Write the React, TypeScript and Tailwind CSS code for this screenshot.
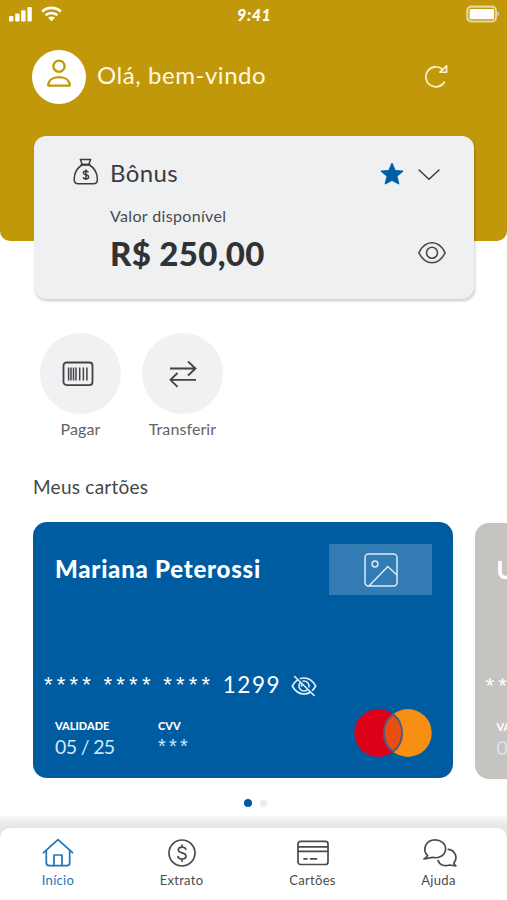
import type { ReactNode } from 'react'
import clsx from 'clsx'

function StatusBar() {
  return (
    <div className="relative flex h-7 items-start justify-between pl-[9px] pr-[7px] text-white">
      <div className="flex gap-[9px] pt-[6px]">
        <svg width="23" height="16" viewBox="0 0 23 16" fill="currentColor">
          <rect x="0" y="10" width="4.4" height="5.4" rx="1.2" />
          <rect x="6.2" y="7.4" width="4.4" height="8" rx="1.2" />
          <rect x="12.2" y="4.2" width="4.4" height="11.2" rx="1.2" />
          <rect x="18.4" y="1" width="4.4" height="14.4" rx="1.2" />
        </svg>
        <svg width="21" height="16" viewBox="0 0 21 16" fill="none" stroke="currentColor" strokeWidth="2.7">
          <path d="M1.2 5.6C6.5 .7 14.5 .7 19.8 5.6" />
          <path d="M4.6 9.3c3.4-3.1 8.4-3.1 11.8 0" />
          <path d="M10.5 15.2 7.1 11.8c2-1.7 4.8-1.7 6.8 0z" fill="currentColor" stroke="none" />
        </svg>
      </div>
      <span className="absolute left-[237px] top-[5px] text-[16px] font-black italic leading-5 tracking-[0.6px]">9:41</span>
      <svg className="mt-[5px]" width="34" height="18" viewBox="0 0 34 18">
        <rect x="1.3" y="1.7" width="28.6" height="14.8" rx="4" fill="none" stroke="#fff" strokeOpacity=".6" strokeWidth="2.2" />
        <rect x="3.6" y="4" width="24.4" height="10.2" rx="1" fill="#fff" />
        <path d="M31.4 6.7c2.1.6 2.1 3.8 0 4.6z" fill="#fff" fillOpacity=".6" />
      </svg>
    </div>
  )
}

function Header() {
  return (
    <header className="h-[241px] rounded-b-[10px] bg-[#c2980b]">
      <StatusBar />
      <div className="mt-[21px] flex h-[55px] items-center pl-8 pr-[59px]">
        <div className="flex size-[54px] justify-center rounded-full bg-white pt-[9px]">
          <svg width="26" height="30" viewBox="0 0 26 30" fill="none" stroke="#c2980b" strokeWidth="2.3">
            <circle cx="13" cy="7.2" r="5.6" />
            <path d="M2.200 26.600c0-5 4-8.400 10.800-8.400s10.800 3.400 10.800 8.400z" strokeLinejoin="round" />
          </svg>
        </div>
        <p className="mb-[4px] ml-[11px] text-[24px] leading-[30px] tracking-[0.55px] text-[#fff8e4]">Olá, bem-vindo</p>
        <svg className="mb-px ml-auto" width="24" height="24" viewBox="0 0 24 24" fill="none" stroke="#fff3cf" strokeWidth="1.6">
          <path d="M18.800 5.600A10 10 0 1 0 20.300 18.200" strokeLinecap="round" />
          <path d="M22.600 1.800v6.400h-6.700z" strokeLinejoin="round" />
        </svg>
      </div>
    </header>
  )
}

function BonusCard() {
  return (
    <section className="relative -mt-[105px] ml-[34px] h-[163px] w-[440px] rounded-xl bg-[#eef0f2] pl-[38px] pr-[28px] pt-[22px] shadow-[1px_2px_3px_rgba(0,0,0,0.2)]">
      <div className="flex h-[30px] items-center text-[#3b3c3e]">
        <svg className="mb-[3px]" width="28" height="28" viewBox="0 0 28 28" fill="none" stroke="currentColor" strokeWidth="1.5" strokeLinejoin="round">
          <path d="M8.300 1.500h10.400l-2 5h-6.400z" />
          <path d="M9.200 6.600h8.600" strokeLinecap="round" />
          <path d="M10 7C5.500 9.700 2.200 15 2.200 21.200c0 3.200 1.300 4.600 4 4.600h15.200c2.700 0 4-1.400 4-4.600C25.400 15 22 9.700 17.400 7z" />
          <path d="M16.400 14.300c-.5-1-1.500-1.300-2.500-1.300-1.400 0-2.500.7-2.500 1.900 0 2.600 5.200 1.200 5.200 4 0 1.200-1.100 2-2.700 2-1.300 0-2.400-.6-2.800-1.500M13.900 11.500v10.600" />
        </svg>
        <span className="ml-[10px] text-[24px] tracking-[0.4px]">Bônus</span>
        <svg className="ml-auto mt-[2px]" width="24" height="24" viewBox="0 0 24 24" fill="#005ea6" stroke="#005ea6" strokeWidth="1.3" strokeLinejoin="round">
          <path d="m12 1.500 3 7.100 7.600.6-5.800 4.900 1.900 7.700L12 18.200l-6.700 3.600 1.900-7.700-5.800-4.900 7.600-.6z" />
        </svg>
        <svg className="ml-[13px] mr-[5px] mt-[3px]" width="24" height="14" viewBox="0 0 24 14" fill="none" stroke="currentColor" strokeWidth="1.5" strokeLinecap="round">
          <path d="m2 2 10 9.300L22 2" />
        </svg>
      </div>
      <div className="mt-[18px] pl-[38px]">
        <p className="text-[16px] leading-5 tracking-[0.35px] text-[#4a4b4d]">Valor disponível</p>
        <div className="mt-[7px] flex items-center justify-between text-[#303234]">
          <strong className="text-[33px] font-black leading-[40px] tracking-[0.3px]">R$ 250,00</strong>
          <svg width="28" height="24" viewBox="0 0 28 24" fill="none" stroke="#4a4b4d" strokeWidth="1.6">
            <path d="M.9 11.700C4 5.200 8.600 1.700 14 1.700s10 3.500 13.100 10C24 18.200 19.400 21.700 14 21.700S4 18.200.9 11.700z" strokeLinejoin="round" />
            <circle cx="14" cy="11.700" r="5.500" />
          </svg>
        </div>
      </div>
    </section>
  )
}

function QuickAction({ label, children }: { label: string; children: ReactNode }) {
  return (
    <button className="flex w-[81px] flex-col items-center text-[#424345]">
      <span className="flex size-[81px] items-center justify-center rounded-full bg-[#eff1f3]">{children}</span>
      <span className="mt-[5px] whitespace-nowrap text-[16px] leading-5 tracking-[0.1px] text-[#626365]">{label}</span>
    </button>
  )
}

function HiddenDigits({ count, small }: { count: number; small?: boolean }) {
  return (
    <span
      className={clsx(
        "font-['Liberation_Sans',sans-serif]",
        small ? 'text-[20px] leading-6 tracking-[3.2px]' : 'w-[59.6px] text-[22px] leading-7 tracking-[4.2px]',
      )}
    >
      {'*'.repeat(count)}
    </span>
  )
}

interface CreditCardProps {
  name: string
  lastDigits: string
  className?: string
}

function CreditCard({ name, lastDigits, className }: CreditCardProps) {
  return (
    <article className={clsx('flex h-[256px] w-[420px] shrink-0 flex-col rounded-[14px] text-white', className)}>
      <div className="flex justify-between pl-[22px] pr-[21px] pt-[22px]">
        <h3 className="mt-[10px] whitespace-nowrap text-[24px] font-black leading-[30px] tracking-[0.75px]">{name}</h3>
        <div className="flex h-[51px] w-[103px] items-center justify-center bg-white/20">
          <svg width="34" height="34" viewBox="0 0 34 34" fill="none" stroke="#d9ebfa" strokeWidth="1.5">
            <rect x="1" y="1" width="32" height="32" rx="3.500" />
            <circle cx="11" cy="11" r="2.900" />
            <path d="M5 33 23.800 13.500 33 22" strokeLinejoin="round" />
          </svg>
        </div>
      </div>
      <div className="mt-[76px] flex h-7 pl-[11px]">
        <HiddenDigits count={4} />
        <HiddenDigits count={4} />
        <HiddenDigits count={4} />
        <span className="text-[22.5px] leading-7 tracking-[1.5px]">{lastDigits}</span>
        <svg className="ml-[10px] mt-[4px]" width="26" height="22" viewBox="0 0 26 22" fill="none" stroke="#e3f0fb" strokeWidth="1.6">
          <path d="M1.300 11C4.200 5.700 8.200 3 13 3s8.800 2.700 11.700 8C21.800 16.300 17.800 19 13 19S4.200 16.300 1.300 11z" />
          <circle cx="13" cy="11" r="5" />
          <path d="M10.500 11.500c0-1.800 1-3 2.700-3" />
          <path d="m5 1.500 18.500 18" stroke="#005ea6" strokeWidth="2" />
          <path d="m3.600 1.500 19.500 19" strokeLinecap="round" />
        </svg>
      </div>
      <div className="flex justify-between pl-[22px] pr-[21px]">
        <dl className="mt-[19px] flex">
          <div className="w-[103px]">
            <dt className="text-[11px] font-black leading-4">VALIDADE</dt>
            <dd className="mt-px whitespace-nowrap text-[19.5px] leading-6 tracking-[-0.65px] text-[#d3e6f6]">05 / 25</dd>
          </div>
          <div>
            <dt className="text-[11px] font-black leading-4">CVV</dt>
            <dd className="text-[#d3e6f6]">
              <HiddenDigits count={3} small />
            </dd>
          </div>
        </dl>
        <svg className="mt-[9px]" width="78" height="50" viewBox="0 0 78 50">
          <circle cx="24.300" cy="25" r="23.900" fill="#dc0019" />
          <circle cx="53.800" cy="25" r="23.900" fill="#f78f12" />
          <path d="M39 6.200a23.900 23.900 0 0 1 0 37.600 23.900 23.900 0 0 1 0-37.600z" fill="#e84e10" stroke="#535a7d" strokeWidth="2" />
        </svg>
      </div>
    </article>
  )
}

function NavItem({ label, active, className, children }: { label: string; active?: boolean; className: string; children: ReactNode }) {
  return (
    <button className={clsx('flex w-[76px] shrink-0 flex-col items-center', active ? 'text-[#1f74b8]' : 'text-[#4a4b4d]', className)}>
      <svg width="36" height="30" viewBox="0 0 36 30" fill="none" stroke="currentColor" strokeWidth="1.700" strokeLinecap="round" strokeLinejoin="round">
        {children}
      </svg>
      <span className="mt-[4px] text-[13px] leading-4 tracking-[0.3px]">{label}</span>
    </button>
  )
}

function BottomNav() {
  return (
    <div className="mt-auto bg-linear-to-b from-[#f8f8f8] from-0% to-[#e4e4e4] to-[12px] pt-[12px]">
      <nav className="flex h-[72px] rounded-t-[10px] bg-white pt-[10px]">
        <NavItem label="Início" active className="ml-[20px]">
          <path d="M3.500 14.700 18 1.600l14.500 13.100" />
          <path d="M6.300 12.500v12.200c0 2 1 3 3 3h17.400c2 0 3-1 3-3V12.500" />
          <path d="M14 27.500V17h8v10.500" />
        </NavItem>
        <NavItem label="Extrato" className="ml-[47.5px]">
          <circle cx="18" cy="15" r="13" />
          <path d="M21.800 11.200c-.5-1.300-2-2-3.700-2-2.200 0-3.800 1.100-3.800 2.800 0 4 7.700 1.800 7.700 6 0 1.800-1.700 3-4 3-2.100 0-3.700-.9-4.100-2.500M18 7.200v2M18 21v2.200" />
        </NavItem>
        <NavItem label="Cartões" className="ml-[55px]">
          <rect x="3" y="3.300" width="30" height="23.200" rx="2.500" />
          <path d="M3 8.800h30M3 13.300h30M9 20.800h3M15.500 20.800h6" />
        </NavItem>
        <NavItem label="Ajuda" className="ml-[50px]">
          <path d="M6.600 17.600C.5 11.400 5.200 1.800 14 1.800c6 0 10.600 3.900 10.600 9 0 6.300-6.300 10.300-13 8.500L3 21c1.900-.8 3.200-2 3.600-3.400z" />
          <path d="M27.200 11.300c6.600.5 10.200 8.300 5.700 13.500.1 1.100.7 2 2 3L28.600 27c-5.200 1.800-10.400-.2-11.500-4.500" />
        </NavItem>
      </nav>
    </div>
  )
}

export default function App() {
  return (
    <main className="flex h-[900px] w-[507px] flex-col overflow-hidden bg-white font-[Lato,sans-serif]">
      <Header />
      <BonusCard />

      <div className="ml-10 mt-[34px] flex gap-[21px]">
        <QuickAction label="Pagar">
          <svg className="mr-[5px]" width="32" height="26" viewBox="0 0 32 26" fill="none" stroke="currentColor" strokeWidth="1.800">
            <rect x="1.500" y="1.500" width="29" height="22.600" rx="3" />
            <path d="M6.600 6.500v13M9 6.500v13M11.500 6.500v13M14 6.500v13M17.700 6.500v13M21.400 6.500v13M24.900 6.500v13" strokeWidth="1.500" />
          </svg>
        </QuickAction>
        <QuickAction label="Transferir">
          <svg width="30" height="28" viewBox="0 0 30 28" fill="none" stroke="currentColor" strokeWidth="1.800">
            <path d="M2 8.500h25.500M20 1.500l7.500 7-7.500 7M28 19.800H2.500M9.500 13l-7 6.800 7 7" />
          </svg>
        </QuickAction>
      </div>

      <h2 className="ml-[33px] mt-[36px] text-[19px] leading-6 tracking-[0.25px] text-[#454648]">Meus cartões</h2>

      <div className="ml-[33px] mt-[23px] flex gap-[21.500px]">
        <CreditCard name="Mariana Peterossi" lastDigits="1299" className="bg-[#005ca1]" />
        <CreditCard name="Usuário" lastDigits="1299" className="mt-px bg-[#c5c4c0]" />
      </div>

      <div className="ml-[4px] mt-[20px] flex items-center justify-center gap-[8px]">
        <span className="size-[8px] rounded-full bg-[#005ca1]" />
        <span className="size-[7px] rounded-full bg-[#ebebeb]" />
      </div>

      <BottomNav />
    </main>
  )
}
